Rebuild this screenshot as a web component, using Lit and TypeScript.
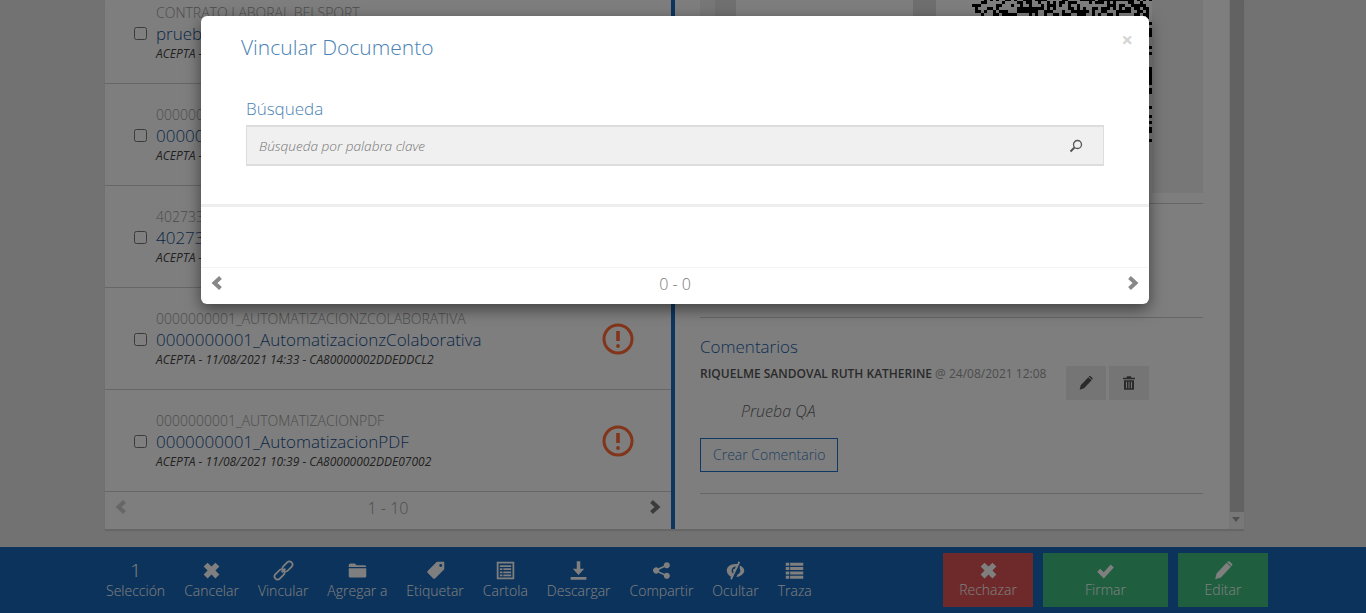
import { LitElement, html, css, svg } from 'lit';
import { customElement } from 'lit/decorators.js';

const icons: Record<string, unknown> = {
  remove: svg`<path d="M3 7.500l4.500-4.500L12 7.500 16.500 3 21 7.500 16.500 12l4.500 4.500-4.500 4.500L12 16.500 7.500 21 3 16.500 7.500 12z"/>`,
  link: svg`<g transform="rotate(-45 12 12)" fill="none" stroke="currentColor" stroke-width="2"><rect x="-1" y="8.500" width="13" height="7" rx="3.500"/><rect x="12" y="8.500" width="13" height="7" rx="3.500"/><path d="M9 12h6"/></g>`,
  folder: svg`<path d="M2 8V6.200C2 5 2.800 4 4 4h5l2 2h9c1.200 0 2 .8 2 1.800V8zM2 9.500h20v9c0 1-.8 1.500-2 1.500H4c-1.200 0-2-.5-2-1.500z"/>`,
  tag: svg`<path fill-rule="evenodd" d="M13.500 2H22v8.500L11.500 21a1.500 1.500 0 01-2.100 0L3 14.600a1.500 1.500 0 010-2.100zM18 4.500a1.700 1.700 0 100 3.400 1.700 1.700 0 000-3.400z"/>`,
  list: svg`<path fill-rule="evenodd" d="M2 2h20v20H2zM4 4v16h16V4zM5.500 6h13v2h-13zM5.500 9.500h3v2h-3zM9.500 9.500h9v2h-9zM5.500 13h3v2h-3zM9.500 13h9v2h-9zM5.500 16.500h3v2h-3zM9.500 16.500h9v2h-9z"/>`,
  download: svg`<path d="M10 1.500h4v8.500h4.500L12 17l-6.500-7H10zM3 19.500h18v3H3z"/>`,
  share: svg`<path d="M18 2.500a3.500 3.500 0 11-2.600 5.800L9.300 11a3.500 3.500 0 010 2l6.100 2.700a3.500 3.500 0 11-.8 1.800L8.300 14.600a3.500 3.500 0 110-5.200l6.300-2.900A3.500 3.500 0 0118 2.500z"/>`,
  hide: svg`<path fill-rule="evenodd" d="M15.500 1.500l1.800 1-9.500 20-1.800-1 1-2.200C4.300 17.800 2 15.200 2 12c0-4.200 4.200-7.500 10-7.500.7 0 1.400.1 2.100.2zM12.500 7.500C9.800 7.500 7.500 9.500 7.500 12c0 1.300.6 2.500 1.600 3.300l.8-1.800c-.5-.4-.8-1-.8-1.500 0-1.100.9-1.900 2.100-2.100zM17 6.200c3 1.300 5 3.300 5 5.800 0 3.700-3.800 6.800-9 7.400l1.500-3c1.800-.8 3-2.500 3-4.400 0-1-.3-1.900-.8-2.600z"/>`,
  rows: svg`<path d="M2 3h4v3.500H2zM7 3h15v3.500H7zM2 8h4v3.500H2zM7 8h15v3.500H7zM2 13h4v3.500H2zM7 13h15v3.500H7zM2 18h4v3.500H2zM7 18h15v3.500H7z"/>`,
  check: svg`<path d="M2.500 13.500l3.500-3.500 4 4 8-9 3.500 3.500L10 21z"/>`,
  pencil: svg`<path d="M2.500 22l1.600-6.500L15.500 3.200l5 4.600L9 20zM16.800 1.800c.6-.6 1.500-.6 2.100 0l2.800 2.600c.6.6.6 1.500 0 2l-.6.6-5-4.600z"/>`,
  trash: svg`<path fill-rule="evenodd" d="M9 2h6l.8 2H21v2.500H3V4h5.200zM4.500 8h15v14h-15zM7.500 10v10h1.500V10zM11.250 10v10h1.500V10zM15 10v10h1.500V10z"/>`,
};

const icon = (name: string, size = 21) =>
  html`<svg class="ico" width=${size} height=${size} viewBox="0 0 24 24" fill="currentColor">${icons[name]}</svg>`;

const chevron = (dir: 'l' | 'r') =>
  html`<svg width="12" height="14" viewBox="0 0 12 14" fill="none" stroke="currentColor" stroke-width="4">
    <path d=${dir === 'l' ? 'M9.500 1.500L3.500 7l6 5.500' : 'M2.500 1.500L8.500 7l-6 5.500'} />
  </svg>`;

// pseudo random modules for the code on the preview
function qrPath() {
  let seed = 48271;
  let d = '';
  for (let y = 0; y < 48; y++) {
    for (let x = 0; x < 60; x++) {
      seed = (seed * 16807) % 2147483647;
      if (seed % 100 < 52) d += `M${x * 3} ${y * 3}h3v3h-3z`;
    }
  }
  return d;
}
const QR = qrPath();

const docs = [
  ['CONTRATO LABORAL BELSPORT', 'prueba contrato laboral', 'ACEPTA - 12/08/2021 09:12 - CA80000002DDF01A21'],
  ['0000000001_AUTOMATIZACIONPRUEBA', '0000000001_AutomatizacionPrueba', 'ACEPTA - 11/08/2021 16:20 - CA80000002DDEE1C3'],
  ['402733_DOCUMENTO', '402733_Documento', 'ACEPTA - 11/08/2021 15:02 - CA80000002DDEDF10'],
  ['0000000001_AUTOMATIZACIONZCOLABORATIVA', '0000000001_AutomatizacionzColaborativa', 'ACEPTA - 11/08/2021 14:33 - CA80000002DDEDDCL2'],
  ['0000000001_AUTOMATIZACIONPDF', '0000000001_AutomatizacionPDF', 'ACEPTA - 11/08/2021 10:39 - CA80000002DDE07002'],
];

const actions = [
  ['remove', 'Cancelar'],
  ['link', 'Vincular'],
  ['folder', 'Agregar a'],
  ['tag', 'Etiquetar'],
  ['list', 'Cartola'],
  ['download', 'Descargar'],
  ['share', 'Compartir'],
  ['hide', 'Ocultar'],
  ['rows', 'Traza'],
];

@customElement('app-root')
export class AppRoot extends LitElement {
  static styles = css`
    :host {
      display: block;
      position: relative;
      height: 613px;
      overflow: hidden;
      background: #e4e4e4;
      font-family: "Open Sans", sans-serif;
      color: #666;
    }
    .page {
      display: flex;
      flex-direction: column;
      height: 613px;
    }
    .panel {
      display: flex;
      width: 1139px;
      height: 529px;
      margin-left: 105px;
      background: #fcfcfc;
      box-shadow: 0 2px 1px #ccc;
      overflow: hidden;
    }
    .list {
      display: flex;
      flex-direction: column;
      width: 566px;
      flex: none;
    }
    .items { margin-top: -18px; }
    .item {
      display: grid;
      grid-template-columns: 13px 1fr 32px;
      column-gap: 9px;
      grid-template-rows: 18px 25px 15px;
      align-content: start;
      align-items: center;
      height: 102px;
      padding: 21px 37px 0 29px;
      box-sizing: border-box;
      border-bottom: 1px solid #ccc;
    }
    .item input { margin: 0; width: 13px; height: 13px; grid-row: 2; grid-column: 1; }
    .code { grid-row: 1; grid-column: 2; font-size: 14px; font-weight: 300; color: #999; white-space: nowrap; }
    .name { grid-row: 2; grid-column: 2; font-size: 17px; font-weight: 300; color: #164f8e; white-space: nowrap; }
    .meta { grid-row: 3; grid-column: 2; font-size: 12px; font-style: italic; color: #444; white-space: nowrap; }
    .alert {
      grid-row: 1 / 4;
      grid-column: 3;
      position: relative;
      z-index: 2;
      width: 32px;
      height: 32px;
      margin-top: 2px;
    }
    .pager {
      display: flex;
      align-items: center;
      justify-content: space-between;
      flex: 1;
      padding: 0 10px 5px;
      font-size: 16px;
      font-weight: 300;
      color: #999;
    }
    .pager .off { color: #ccc; }
    .pager .on { color: #777; }
    .rule { width: 4px; flex: none; background: #1a6cbe; }
    .detail {
      position: relative;
      flex: 1;
      display: flex;
      flex-direction: column;
      padding-left: 25px;
    }
    .inner { width: 503px; }
    .preview {
      display: flex;
      height: 193px;
      background: #efefef;
      overflow: hidden;
    }
    .shade { width: 15px; flex: none; }
    .gap { width: 21px; background: #e0e0e0; flex: none; }
    .sheet { width: 177px; background: #fcfcfc; flex: none; }
    .side { width: 23px; background: #dfdfdf; flex: none; }
    .sheet2 {
      flex: none;
      width: 216px;
      height: 193px;
      background: #fcfcfc;
      padding-left: 36px;
      box-sizing: border-box;
    }
    .sheet2 svg { display: block; }
    .block { border-bottom: 1px solid #ccc; }
    .b1 { height: 10px; }
    .b2 { height: 113px; }
    .comments { height: 176px; padding-top: 19px; box-sizing: border-box; }
    .comments h4 { margin: 0 0 10px; font-size: 17px; line-height: 20px; font-weight: 300; color: #1a60a8; }
    .c-row { display: flex; height: 33px; }
    .who { width: 366px; flex: none; font-size: 12px; line-height: 16px; color: #999; white-space: nowrap; margin-top: -1px; }
    .who b { font-weight: 600; color: #555; }
    .tool {
      display: flex;
      align-items: center;
      justify-content: center;
      width: 40px;
      height: 34px;
      margin-right: 3px;
      background: #ebebeb;
      color: #555;
      margin-top: -1px;
    }
    .said { font-size: 16px; line-height: 22px; font-style: italic; font-weight: 300; color: #666; padding-left: 41px; }
    .make {
      display: inline-block;
      margin-top: 16px;
      padding: 0 12px;
      height: 32px;
      line-height: 32px;
      border: 1px solid #1e70c8;
      font-size: 14px;
      font-weight: 300;
      color: #3f7cc0;
    }
    .scroll {
      position: absolute;
      top: 0;
      right: 0;
      width: 15px;
      height: 529px;
      background: #f1f1f1;
    }
    .thumb { width: 14px; height: 512px; margin-left: 1px; background: #c4c4c4; }
    .down {
      margin: 5px 0 0 3px;
      width: 0;
      height: 0;
      border: 4px solid transparent;
      border-top: 5px solid #a0a0a0;
      border-bottom: 0;
    }
    .bar {
      display: flex;
      align-items: center;
      margin-top: 18px;
      height: 66px;
      padding: 0 88px 0 106px;
      background: #1866b6;
      color: #fff;
    }
    .actions { display: flex; gap: 19px; }
    .act {
      display: flex;
      flex-direction: column;
      align-items: center;
      font-size: 14px;
      font-weight: 300;
      line-height: 20px;
      white-space: nowrap;
    }
    .act .top { display: flex; align-items: center; height: 21px; font-size: 19px; }
    .ico { display: block; }
    .big {
      display: flex;
      flex-direction: column;
      align-items: center;
      justify-content: center;
      height: 54px;
      margin-right: 10px;
      font-size: 14px;
      font-weight: 300;
      line-height: 20px;
    }
    .big .top { height: 20px; display: flex; align-items: center; }
    .reject { width: 90px; margin-left: auto; background: #dc5454; }
    .sign { width: 125px; background: #3fbe7e; }
    .edit { width: 90px; background: #3fbe7e; }
    .backdrop {
      position: absolute;
      inset: 0;
      z-index: 1;
      background: rgba(0, 0, 0, 0.5);
    }
    .modal {
      position: absolute;
      top: 16px;
      left: 201px;
      z-index: 3;
      display: flex;
      flex-direction: column;
      width: 948px;
      height: 288px;
      background: #fff;
      border-radius: 6px;
      box-shadow: 0 5px 15px rgba(0, 0, 0, 0.5);
    }
    .head {
      display: flex;
      align-items: flex-start;
      justify-content: space-between;
      height: 64px;
      padding: 17px 16px 0 40px;
      box-sizing: border-box;
    }
    .head h3 { margin: 0; font-size: 21px; line-height: 28px; font-weight: 300; color: #4a82b4; }
    .close { font-size: 20px; line-height: 14px; font-weight: 700; color: #d4d4d4; }
    .form { padding: 18px 45px 0; height: 127px; box-sizing: border-box; border-bottom: 3px solid #eee; }
    .form label { display: block; font-size: 17px; font-weight: 300; line-height: 22px; color: #4a82b4; margin-bottom: 5px; }
    .search {
      display: flex;
      align-items: center;
      justify-content: space-between;
      height: 41px;
      padding: 0 20px 0 12px;
      box-sizing: border-box;
      background: #f0f0f0;
      border: 1px solid #ddd;
      border-top-width: 2px;
      border-bottom-width: 2px;
      font-size: 13.600px;
      font-weight: 300;
      font-style: italic;
      color: #777;
    }
    .spacer { height: 60px; border-bottom: 1px solid #f4f4f4; }
    .foot {
      display: flex;
      align-items: center;
      justify-content: space-between;
      flex: 1;
      padding: 0 10px 4px;
      font-size: 16px;
      font-weight: 300;
      color: #777;
    }
    .foot .c { color: #888; }
  `;

  render() {
    return html`
      <div class="page">
        <div class="panel">
          <section class="list">
            <div class="items">
              ${docs.map(([code, name, meta]) => html`
                <div class="item">
                  <span class="code">${code}</span>
                  <input type="checkbox" />
                  <span class="name">${name}</span>
                  <span class="meta">${meta}</span>
                  <svg class="alert" viewBox="0 0 32 32" fill="none" stroke="#82351a" stroke-width="3">
                    <circle cx="16" cy="16" r="14" />
                    <path d="M16 8v10" stroke-width="3.600" />
                    <circle cx="16" cy="23" r="1.900" fill="#82351a" stroke="none" />
                  </svg>
                </div>
              `)}
            </div>
            <div class="pager">
              <span class="off">${chevron('l')}</span>
              <span>1 - 10</span>
              <span class="on">${chevron('r')}</span>
            </div>
          </section>
          <div class="rule"></div>
          <section class="detail">
            <div class="inner">
              <div class="preview">
                <div class="shade"></div>
                <div class="gap"></div>
                <div class="sheet"></div>
                <div class="side"></div>
                <div class="sheet2">
                  <svg width="180" height="142" viewBox="0 2 180 142"><path d=${QR} fill="#000" /></svg>
                </div>
              </div>
              <div class="block b1"></div>
              <div class="block b2"></div>
              <div class="comments block">
                <h4>Comentarios</h4>
                <div class="c-row">
                  <div class="who"><b>RIQUELME SANDOVAL RUTH KATHERINE</b> @ 24/08/2021 12:08</div>
                  <div class="tool">${icon('pencil', 16)}</div>
                  <div class="tool">${icon('trash', 16)}</div>
                </div>
                <div class="said">Prueba QA</div>
                <span class="make">Crear Comentario</span>
              </div>
            </div>
            <div class="scroll">
              <div class="thumb"></div>
              <div class="down"></div>
            </div>
          </section>
        </div>
        <footer class="bar">
          <div class="actions">
            <div class="act"><span class="top">1</span>Selección</div>
            ${actions.map(([ic, label]) => html`
              <div class="act"><span class="top">${icon(ic)}</span>${label}</div>
            `)}
          </div>
          <div class="big reject"><span class="top">${icon('remove')}</span>Rechazar</div>
          <div class="big sign"><span class="top">${icon('check')}</span>Firmar</div>
          <div class="big edit"><span class="top">${icon('pencil')}</span>Editar</div>
        </footer>
      </div>
      <div class="backdrop"></div>
      <div class="modal">
        <div class="head">
          <h3>Vincular Documento</h3>
          <span class="close">×</span>
        </div>
        <div class="form">
          <label>Búsqueda</label>
          <div class="search">
            <span>Búsqueda por palabra clave</span>
            <svg width="14" height="14" viewBox="0 0 14 14" fill="none" stroke="#555">
              <circle cx="8.500" cy="5.500" r="4" stroke-width="1.300" />
              <path d="M5.500 8.500L1.500 12.500" stroke-width="2" />
            </svg>
          </div>
        </div>
        <div class="spacer"></div>
        <div class="foot">
          <span class="c">${chevron('l')}</span>
          <span>0 - 0</span>
          <span class="c">${chevron('r')}</span>
        </div>
      </div>
    `;
  }
}
